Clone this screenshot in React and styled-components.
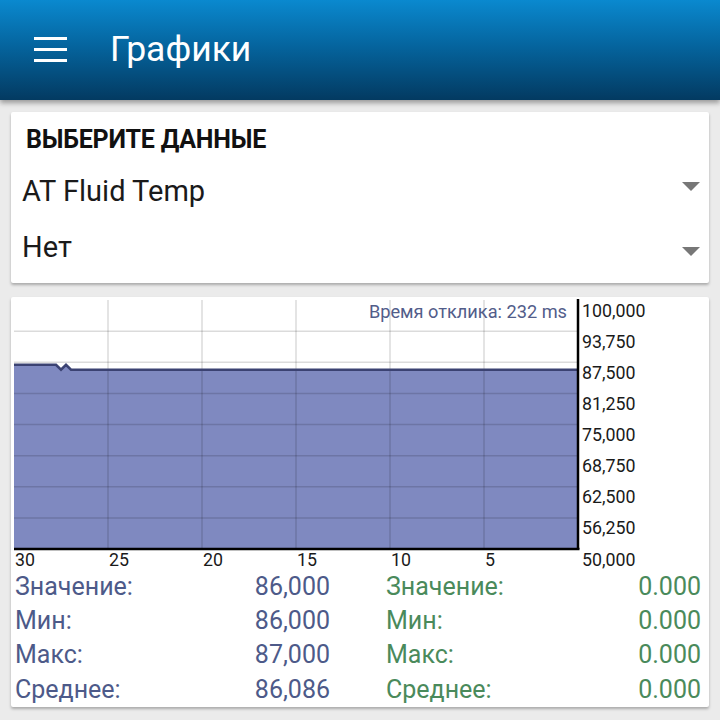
import React from "react";
import styled, { createGlobalStyle } from "styled-components";

const GlobalStyle = createGlobalStyle`
  html, body {
    margin: 0;
    padding: 0;
    background: #ebebeb;
    font-family: Roboto, "Noto Sans", sans-serif;
  }
`;

const Page = styled.div`
  width: 720px;
  height: 720px;
  display: flex;
  flex-direction: column;
  overflow: hidden;
  background: #ebebeb;
`;

const Header = styled.header`
  height: 100px;
  flex-shrink: 0;
  display: flex;
  align-items: center;
  background: linear-gradient(180deg, #0a89cf 0%, #05659f 45%, #033a61 100%);
  box-shadow: 0 3px 5px rgba(0, 0, 0, 0.35);
  position: relative;
  z-index: 1;
`;

const MenuButton = styled.div`
  width: 110px;
  display: flex;
  justify-content: flex-start;
  padding-left: 34px;
  box-sizing: border-box;
  margin-top: -2px;
`;

const Title = styled.h1`
  margin: 0;
  color: #fff;
  font-size: 35.5px;
  font-weight: 400;
  margin-top: -2px;
`;

const Content = styled.main`
  flex: 1;
  display: flex;
  flex-direction: column;
  gap: 14px;
  padding: 12px 11px 0 11px;
`;

const Card = styled.section`
  background: #fff;
  border-radius: 2px;
  box-shadow: 0 2px 3px rgba(0, 0, 0, 0.28);
`;

const SelectCard = styled(Card)`
  height: 171px;
  box-sizing: border-box;
  padding: 4px 9px 8px 0;
`;

const SectionTitle = styled.div`
  height: 47px;
  display: flex;
  align-items: center;
  padding-left: 15px;
  font-size: 25px;
  font-weight: 700;
  color: #111;
  letter-spacing: -0.2px;
`;

const SelectRow = styled.div`
  height: 56px;
  display: flex;
  align-items: center;
  justify-content: space-between;
  padding-left: 11px;
  font-size: 29px;
  color: #1a1a1a;
`;

const Arrow = styled.span`
  width: 0;
  height: 0;
  border-left: 9px solid transparent;
  border-right: 9px solid transparent;
  border-top: 9px solid #777;
  transform: translateY(${(p) => p.$shift}px);
`;

const ChartCard = styled(Card)`
  height: 410px;
  display: flex;
  flex-direction: column;
`;

const ChartBox = styled.div`
  height: 272px;
  flex-shrink: 0;
`;

const StatsGrid = styled.div`
  display: grid;
  grid-template-columns: 1fr 1fr;
  column-gap: 56px;
  padding: 0 8px 0 4px;
`;

const StatColumn = styled.div`
  display: flex;
  flex-direction: column;
  color: ${(p) => p.$color};
`;

const StatRow = styled.div`
  height: 34.4px;
  display: flex;
  align-items: center;
  justify-content: space-between;
  font-size: 25px;
`;

const NavEdge = styled.div`
  height: 2px;
  margin-top: auto;
  background: #111;
  flex-shrink: 0;
`;

const Spacer = styled.div`
  flex: 1;
`;

const MenuIcon = () => (
  <svg width="33" height="25" viewBox="0 0 33 25">
    <rect x="0" y="0" width="33" height="3" fill="#fff" />
    <rect x="0" y="11" width="33" height="3" fill="#fff" />
    <rect x="0" y="22" width="33" height="3" fill="#fff" />
  </svg>
);

const W = 698;
const H = 272;
const X0 = 3;
const X1 = 567;
const Y0 = 3;
const Y1 = 252;

const valueToY = (v) => Y0 + ((100000 - v) / 50000) * (Y1 - Y0);
const timeToX = (t) => X0 + ((30 - t) / 30) * (X1 - X0);

const yLabels = ["100,000", "93,750", "87,500", "81,250", "75,000", "68,750", "62,500", "56,250", "50,000"];
const xLabels = ["30", "25", "20", "15", "10", "5"];

const points = [
  [X0, valueToY(87000)],
  [45, valueToY(87000)],
  [50, valueToY(86000)],
  [55, valueToY(87000)],
  [60, valueToY(86000)],
  [X1, valueToY(86000)],
];

const Chart = () => {
  const line = points.map((p) => p.join(",")).join(" ");
  const area = `${X0},${Y1} ${line} ${X1},${Y1}`;
  const step = (Y1 - Y0) / 8;
  return (
    <svg width={W} height={H} viewBox={`0 0 ${W} ${H}`} style={{ display: "block" }}>
      <polygon points={area} fill="#7f89c0" />
      {Array.from({ length: 7 }, (_, i) => (
        <line
          key={"h" + i}
          x1={X0}
          x2={X1}
          y1={Y0 + step * (i + 1)}
          y2={Y0 + step * (i + 1)}
          stroke="rgba(0,0,0,0.14)"
          strokeWidth="1.5"
        />
      ))}
      {Array.from({ length: 5 }, (_, i) => (
        <line
          key={"v" + i}
          x1={timeToX(25 - i * 5)}
          x2={timeToX(25 - i * 5)}
          y1={Y0}
          y2={Y1}
          stroke="rgba(0,0,0,0.14)"
          strokeWidth="1.5"
        />
      ))}
      <polyline points={line} fill="none" stroke="#3b4272" strokeWidth="2.5" strokeLinejoin="miter" />
      <line x1={X0} x2={X1 + 1.5} y1={Y1} y2={Y1} stroke="#000" strokeWidth="2.5" />
      <line x1={X1} x2={X1} y1={Y0 - 1} y2={Y1} stroke="#000" strokeWidth="2.5" />
      <text x={556} y={21} textAnchor="end" fontSize="18.2" fill="#525d8a" fontFamily="Roboto, sans-serif">
        Время отклика: 232 ms
      </text>
      {yLabels.map((l, i) => (
        <text key={l} x={571} y={Y0 + step * i + 16.5} fontSize="17.8" fill="#1a1a1a" fontFamily="Roboto, sans-serif">
          {l}
        </text>
      ))}
      {xLabels.map((l, i) => (
        <text key={l} x={timeToX(30 - i * 5) + 1} y={Y1 + 16.5} fontSize="17.8" fill="#1a1a1a" fontFamily="Roboto, sans-serif">
          {l}
        </text>
      ))}
    </svg>
  );
};

const stats = [
  ["Значение:", "86,000", "0.000"],
  ["Мин:", "86,000", "0.000"],
  ["Макс:", "87,000", "0.000"],
  ["Среднее:", "86,086", "0.000"],
];

const App = () => {
  return (
    <Page>
      <GlobalStyle />
      <Header>
        <MenuButton>
          <MenuIcon />
        </MenuButton>
        <Title>Графики</Title>
      </Header>
      <Content>
        <SelectCard>
          <SectionTitle>ВЫБЕРИТЕ ДАННЫЕ</SectionTitle>
          <SelectRow>
            <span>AT Fluid Temp</span>
            <Arrow $shift={-5} />
          </SelectRow>
          <SelectRow>
            <span>Нет</span>
            <Arrow $shift={4} />
          </SelectRow>
        </SelectCard>
        <ChartCard>
          <ChartBox>
            <Chart />
          </ChartBox>
          <StatsGrid>
            <StatColumn $color="#4d5a89">
              {stats.map(([label, value]) => (
                <StatRow key={label}>
                  <span>{label}</span>
                  <span>{value}</span>
                </StatRow>
              ))}
            </StatColumn>
            <StatColumn $color="#4a8a5b">
              {stats.map(([label, , value]) => (
                <StatRow key={label}>
                  <span>{label}</span>
                  <span>{value}</span>
                </StatRow>
              ))}
            </StatColumn>
          </StatsGrid>
        </ChartCard>
        <Spacer />
      </Content>
      <NavEdge />
    </Page>
  );
};

export default App;
